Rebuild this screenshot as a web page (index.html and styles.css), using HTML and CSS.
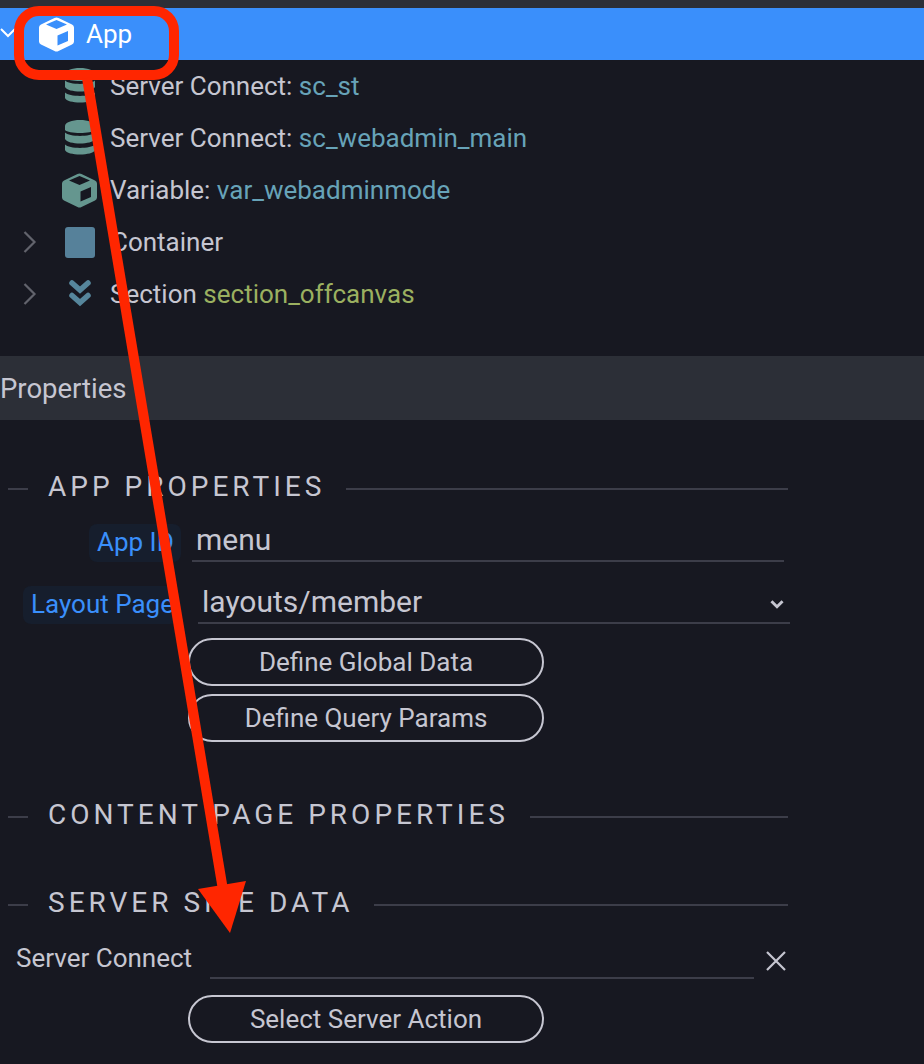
FILE: index.html
```html
<!DOCTYPE html>
<html lang="en">
<head>
<meta charset="utf-8">
<title>App Structure</title>
<link rel="stylesheet" href="styles.css">
</head>
<body>
<div class="topbar"></div>
<section class="tree">
  <div class="row row-root">
    <svg class="chev chev-root" viewBox="0 0 16 16"><path d="M1 5l7 7 7-7"/></svg>
    <svg class="ico-cube ico-app" viewBox="0 0 35 35"><path class="cube-white" fill-rule="evenodd" d="M15.500 1Q17.500 0 19.500 1L33 7.500Q35 8.500 35 10.500V24.500Q35 26.500 33 27.500L19.500 34Q17.500 35 15.500 34L2 27.500Q0 26.500 0 24.500V10.500Q0 8.500 2 7.500ZM17.500 3 7 7.500 17.500 12 28 7.500ZM18.500 18.500V28.500L29 24V14Z"/></svg>
    <span class="lbl lbl-root">App</span>
  </div>
  <div class="row"><span class="slot"></span>
    <svg class="ico" viewBox="0 0 30 36"><path class="teal" d="M0 6C0 2.500 7 0 15 0s15 2.500 15 6v4c-3 4-27 4-30 0ZM0 12.500c4 4.500 26 4.500 30 0V19c-3 6-27 6-30 0ZM0 24.500c4 4.500 26 4.500 30 0V30c-2 6-28 6-30 0Z"/></svg>
    <span class="lbl">Server Connect: <b class="name">sc_st</b></span>
  </div>
  <div class="row"><span class="slot"></span>
    <svg class="ico" viewBox="0 0 30 36"><path class="teal" d="M0 6C0 2.500 7 0 15 0s15 2.500 15 6v4c-3 4-27 4-30 0ZM0 12.500c4 4.500 26 4.500 30 0V19c-3 6-27 6-30 0ZM0 24.500c4 4.500 26 4.500 30 0V30c-2 6-28 6-30 0Z"/></svg>
    <span class="lbl">Server Connect: <b class="name">sc_webadmin_main</b></span>
  </div>
  <div class="row"><span class="slot"></span>
    <svg class="ico-cube ico-var" viewBox="0 0 35 35"><path class="teal" fill-rule="evenodd" d="M15.500 1Q17.500 0 19.500 1L33 7.500Q35 8.500 35 10.500V24.500Q35 26.500 33 27.500L19.500 34Q17.500 35 15.500 34L2 27.500Q0 26.500 0 24.500V10.500Q0 8.500 2 7.500ZM17.500 3 7 7.500 17.500 12 28 7.500ZM18.500 18.500V28.500L29 24V14Z"/></svg>
    <span class="lbl">Variable: <b class="name">var_webadminmode</b></span>
  </div>
  <div class="row"><span class="slot"><svg class="chev" viewBox="0 0 14 24"><path d="M2 2l10 10L2 22"/></svg></span>
    <span class="ico-box"></span>
    <span class="lbl">Container</span>
  </div>
  <div class="row"><span class="slot"><svg class="chev" viewBox="0 0 14 24"><path d="M2 2l10 10L2 22"/></svg></span>
    <svg class="ico" viewBox="0 0 30 36"><path class="dbl" d="M7 7 15 14 23 7M7 19.500 15 26.500 23 19.500"/></svg>
    <span class="lbl">Section <b class="name name-green">section_offcanvas</b></span>
  </div>
</section>

<div class="panel-title">Properties</div>

<section class="panel">
  <div class="group group-first"><h2>APP PROPERTIES</h2></div>
  <div class="field field-id">
    <span class="chip">App ID</span>
    <div class="input"><span>menu</span></div>
  </div>
  <div class="field field-layout">
    <span class="chip">Layout Page</span>
    <div class="input input-select"><span>layouts/member</span>
      <svg class="sel" viewBox="0 0 14 9"><path d="M2 2l5 5 5-5"/></svg>
    </div>
  </div>
  <div class="btns">
    <button>Define Global Data</button>
    <button>Define Query Params</button>
  </div>
  <div class="group group-content"><h2>CONTENT PAGE PROPERTIES</h2></div>
  <div class="group group-server"><h2>SERVER SIDE DATA</h2></div>
  <div class="field field-sc">
    <span class="plain">Server Connect</span>
    <div class="input input-empty"></div>
    <svg class="close" viewBox="0 0 22 22"><path d="M2 2l18 18M20 2L2 20"/></svg>
  </div>
  <div class="btns btns-last">
    <button>Select Server Action</button>
  </div>
</section>

<svg class="annotation" viewBox="0 0 924 1064">
  <rect x="19" y="11" width="155" height="64" rx="20"/>
  <path class="shaft" d="M87 78 223 890"/>
  <path class="head" d="M198 889 246 881 230 933Z"/>
</svg>
</body>
</html>
```
FILE: styles.css
```css
* { box-sizing: border-box; }
html, body { margin: 0; height: 1064px; overflow: hidden; }
body {
  position: relative;
  background: #171821;
  color: #c6c6d1;
  font-family: Roboto, "Liberation Sans", sans-serif;
  font-size: 26px;
}
.topbar { height: 8px; background: #2c2f37; }
.tree { height: 312px; }
.row { height: 52px; display: flex; align-items: center; padding-left: 22px; }
.row-root { background: #3a8ffb; color: #fff; padding-left: 0; }
.slot { width: 43px; display: flex; align-items: center; flex: none; }
.chev { width: 15px; height: 24px; fill: none; stroke: #62636c; stroke-width: 2.2; }
.chev-root { width: 16px; height: 16px; stroke: #fff; stroke-width: 2; margin-right: 23px; margin-top: -4px; flex: none; }
.ico-cube { width: 35px; height: 35px; margin-right: 13px; flex: none; }
.ico-app { margin-right: 12px; }
.cube-white { fill: #fff; }
.ico { width: 30px; height: 36px; margin-right: 15px; flex: none; }
.ico-var { margin-left: -3px; margin-right: 13px; }
.teal { fill: #65968f; }
.dbl { fill: none; stroke: #56869c; stroke-width: 5.5; stroke-linecap: round; }
.ico-box { width: 30px; height: 31px; margin-right: 16px; background: #56819a; border-radius: 3px; flex: none; }
.lbl { white-space: nowrap; line-height: 1; }
.lbl-root { font-size: 26px; }
.name { font-weight: 400; color: #67a3b8; }
.name-green { color: #9bb060; }
.panel-title {
  margin-top: 36px;
  height: 64px;
  background: #2c2f37;
  display: flex;
  align-items: center;
  font-size: 27.5px;
}
.group {
  display: flex;
  align-items: center;
  width: 780px;
  margin-left: 8px;
  height: 40px;
}
.group::before { content: ""; width: 20px; height: 2px; background: #3c3d49; flex: none; }
.group::after { content: ""; flex: 1; height: 2px; background: #3c3d49; }
.group h2 {
  margin: 0;
  padding: 0 21px 5px 20px;
  font-size: 28px;
  font-weight: 400;
  letter-spacing: 4px;
  white-space: nowrap;
}
.group-first { margin-top: 49px; }
.group-content { margin-top: 55px; }
.group-server { margin-top: 48px; }
.field { display: flex; align-items: flex-end; }
.chip {
  display: flex;
  align-items: center;
  height: 38px;
  padding: 0 8px 2px;
  border-radius: 8px;
  background: #161e2d;
  color: #3a8ffb;
  white-space: nowrap;
  flex: none;
}
.input {
  height: 44px;
  border-bottom: 2px solid #3c3d49;
  display: flex;
  align-items: center;
  justify-content: space-between;
  font-size: 30px;
  padding-left: 4px;
}
.field-id { margin-top: 9px; padding-left: 89px; }
.field-id .chip { width: 92px; }
.field-id .input { width: 592px; margin-left: 11px; }
.field-layout { margin-top: 18px; padding-left: 23px; }
.field-layout .chip { width: 155px; }
.field-layout .input { width: 592px; margin-left: 20px; }
.sel { width: 16px; height: 10px; fill: none; stroke: #c6c6d1; stroke-width: 2.6; margin-right: 5px; margin-top: 6px; }
.btns { display: flex; flex-direction: column; gap: 8px; padding-left: 188px; margin-top: 14px; }
.btns button {
  width: 356px;
  height: 48px;
  border: 2px solid #c6c6d1;
  border-radius: 24px;
  background: transparent;
  color: #c6c6d1;
  font: 400 26px Roboto, "Liberation Sans", sans-serif;
  padding: 0;
}
.field-sc { padding-left: 16px; align-items: center; height: 54px; }
.plain { white-space: nowrap; width: 194px; flex: none; margin-top: 12px; }
.input-empty { width: 544px; height: 54px; }
.close { width: 22px; height: 22px; margin-left: 11px; margin-top: 18px; fill: none; stroke: #c6c6d1; stroke-width: 2.2; }
.btns-last { margin-top: 16px; }
.annotation { position: absolute; left: 0; top: 0; width: 924px; height: 1064px; pointer-events: none; }
.annotation rect { fill: none; stroke: #ff2600; stroke-width: 10; }
.annotation .shaft { fill: none; stroke: #ff2600; stroke-width: 10; }
.annotation .head { fill: #ff2600; }
```
